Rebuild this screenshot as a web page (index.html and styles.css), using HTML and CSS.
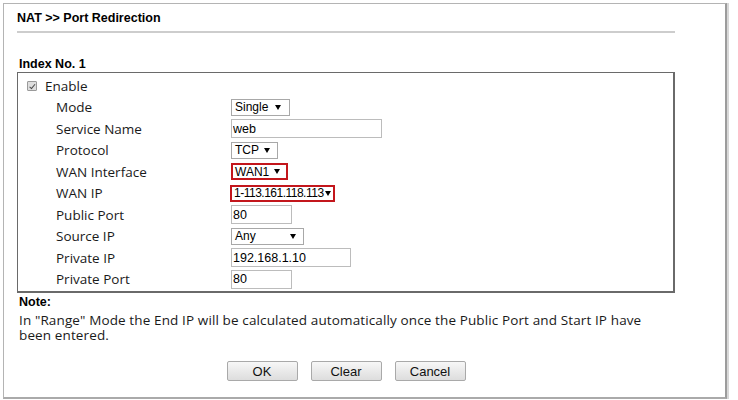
FILE: index.html
```html
<!DOCTYPE html>
<html lang="en">
  <head>
    <meta charset="UTF-8" />
    <meta name="viewport" content="width=device-width, initial-scale=1.0" />
    <title>NAT &gt;&gt; Port Redirection</title>
    <link rel="stylesheet" href="styles.css">
  </head>
  <body>
    <div class="frame">
      <div class="page-title">NAT &gt;&gt; Port Redirection</div>
      <div class="title-line"></div>

      <div class="index-title">Index No. 1</div>
      <div class="index-box">
        <div class="enable-row">
          <span class="check"></span>
          <span>Enable</span>
        </div>

        <div class="row">
          <span class="label">Mode</span>
          <span class="select select-mode"><span>Single</span><i class="arrow"></i></span>
        </div>
        <div class="row">
          <span class="label">Service Name</span>
          <input type="text" class="field field-long" value="web" />
        </div>
        <div class="row">
          <span class="label">Protocol</span>
          <span class="select select-proto"><span>TCP</span><i class="arrow"></i></span>
        </div>
        <div class="row">
          <span class="label">WAN Interface</span>
          <span class="select select-wan marked"><span>WAN1</span><i class="arrow"></i></span>
        </div>
        <div class="row">
          <span class="label">WAN IP</span>
          <span class="select select-ip marked"><span>1-113.161.118.113</span><i class="arrow"></i></span>
        </div>
        <div class="row">
          <span class="label">Public Port</span>
          <input type="text" class="field field-short" value="80" />
        </div>
        <div class="row">
          <span class="label">Source IP</span>
          <span class="select select-src"><span>Any</span><i class="arrow"></i></span>
        </div>
        <div class="row">
          <span class="label">Private IP</span>
          <input type="text" class="field field-mid" value="192.168.1.10" />
        </div>
        <div class="row">
          <span class="label">Private Port</span>
          <input type="text" class="field field-short" value="80" />
        </div>
      </div>

      <div class="note-title">Note:</div>
      <p class="note">In "Range" Mode the End IP will be calculated automatically once the Public Port and Start IP have been entered.</p>

      <div class="buttons">
        <button>OK</button>
        <button>Clear</button>
        <button>Cancel</button>
      </div>
    </div>
  </body>
</html>
```

FILE: styles.css
```css
body {
  margin: 0;
  padding: 0;
  background: #ffffff;
  color: #111;
  font-family: "Liberation Sans", Arial, sans-serif;
}
.frame {
  box-sizing: border-box;
  width: 724px;
  height: 396px;
  margin: 3px 0 0 3px;
  padding: 0 50px 0 13px;
  border: 1px solid #b4b4b4;
  border-right: 2px solid #9c9c9c;
  border-bottom: 2px solid #aaaaaa;
  box-shadow: 2px 0 0 #d8d8d8;
}
.page-title {
  margin-top: 7px;
  font-size: 12.5px;
  line-height: 15px;
  font-weight: bold;
  color: #000;
}
.title-line {
  height: 2px;
  margin-top: 5px;
  background: #cdcdcd;
}
.index-title {
  margin-top: 24px;
  padding-left: 2px;
  font-size: 12.5px;
  line-height: 15px;
  font-weight: bold;
  color: #000;
}
.index-box {
  padding: 3px 0 1px 0;
  border: 1px solid #6a6a6a;
  border-right-width: 2px;
  border-bottom-width: 2px;
  font-family: "Open Sans", sans-serif;
  font-size: 13.5px;
  color: #1a1a1a;
}
.enable-row {
  display: flex;
  align-items: center;
  height: 20.5px;
  padding-left: 9px;
}
.check {
  position: relative;
  box-sizing: border-box;
  width: 10px;
  height: 10px;
  margin: 0 8px 0 0;
  border: 1px solid #9a9a9a;
  border-radius: 1px;
  background: #dedede;
}
.check::after {
  content: "";
  position: absolute;
  left: 2.5px;
  top: 0.5px;
  width: 2px;
  height: 4.5px;
  border: solid #4a4a4a;
  border-width: 0 1.5px 1.5px 0;
  transform: rotate(40deg);
}
.row {
  display: flex;
  align-items: center;
  height: 21.5px;
  padding-left: 38px;
}
.label {
  width: 175px;
  flex: none;
}
.select {
  box-sizing: border-box;
  display: inline-flex;
  align-items: center;
  justify-content: space-between;
  height: 17px;
  padding: 0 8px 0 3px;
  border: 1px solid #a8a8a8;
  font-family: "Liberation Sans", Arial, sans-serif;
  font-size: 12px;
  white-space: nowrap;
  color: #000;
  background: #fff;
}
.arrow {
  flex: none;
  width: 0;
  height: 0;
  border-left: 3px solid transparent;
  border-right: 3px solid transparent;
  border-top: 5px solid #000;
}
.select-mode {
  width: 59px;
}
.select-proto {
  width: 47px;
  padding-right: 7px;
}
.select-wan {
  width: 57px;
  padding: 0 6px 0 2px;
}
.select-src {
  width: 73px;
  padding-right: 7px;
}
.select-ip {
  width: 105px;
  margin-left: -1px;
  padding: 0 2px 0 2px;
  letter-spacing: -0.5px;
}
.marked {
  border: 2px solid #c3161c;
}
.field {
  box-sizing: border-box;
  height: 19px;
  margin: 0;
  padding: 0 1px;
  border: 1px solid #bcbcbc;
  font-family: "Liberation Sans", Arial, sans-serif;
  font-size: 12.5px;
  color: #000;
}
.field-long {
  width: 151px;
}
.field-mid {
  width: 120px;
}
.field-short {
  width: 61px;
}
.note-title {
  margin-top: 2px;
  padding-left: 2px;
  font-size: 12.5px;
  line-height: 15px;
  font-weight: bold;
  color: #000;
}
.note {
  max-width: 640px;
  margin: 3px 0 0 0;
  padding-left: 2px;
  font-family: "Open Sans", sans-serif;
  font-size: 13.5px;
  letter-spacing: 0.12px;
  line-height: 15px;
  color: #1a1a1a;
}
.buttons {
  display: flex;
  justify-content: center;
  gap: 13px;
  width: 658px;
  margin-top: 18px;
}
.buttons button {
  width: 71px;
  height: 20px;
  padding: 0;
  border: 1px solid #a9a9a9;
  border-radius: 2px;
  background: linear-gradient(#f7f7f7, #dddddd);
  font-family: "Liberation Sans", Arial, sans-serif;
  font-size: 13px;
  color: #111;
}
```
